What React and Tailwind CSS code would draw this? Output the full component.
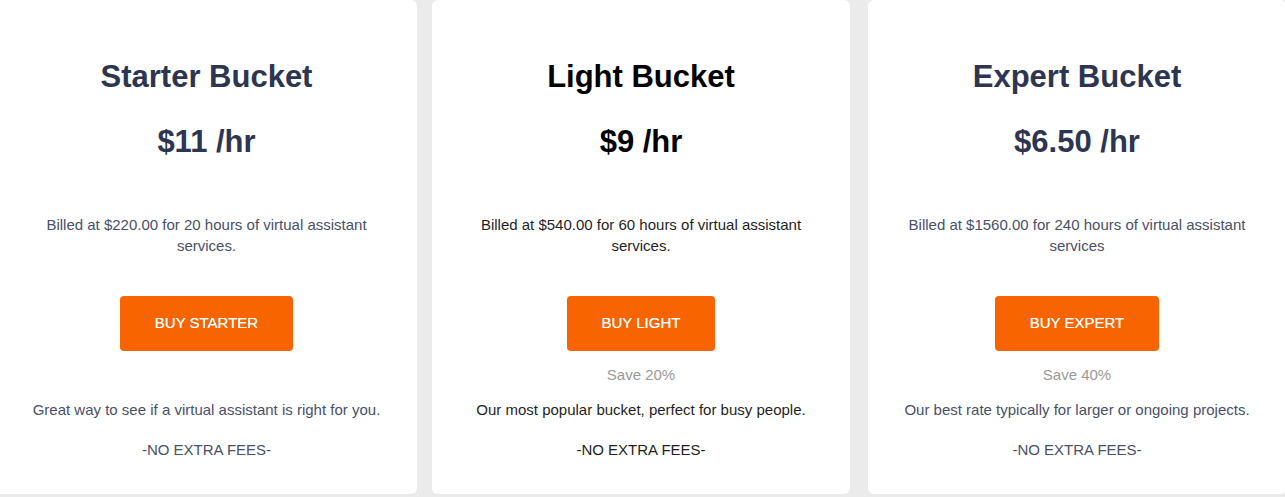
import React from "react";

const plans = [
  {
    title: "Starter Bucket",
    price: "$11 /hr",
    billed: "Billed at $220.00 for 20 hours of virtual assistant services.",
    button: "BUY STARTER",
    save: "",
    desc: "Great way to see if a virtual assistant is right for you.",
    featured: false,
    width: "w-[421px]",
  },
  {
    title: "Light Bucket",
    price: "$9 /hr",
    billed: "Billed at $540.00 for 60 hours of virtual assistant services.",
    button: "BUY LIGHT",
    save: "Save 20%",
    desc: "Our most popular bucket, perfect for busy people.",
    featured: true,
    width: "w-[418px]",
  },
  {
    title: "Expert Bucket",
    price: "$6.50 /hr",
    billed: "Billed at $1560.00 for 240 hours of virtual assistant services",
    button: "BUY EXPERT",
    save: "Save 40%",
    desc: "Our best rate typically for larger or ongoing projects.",
    featured: false,
    width: "w-[418px]",
  },
];

const PlanCard = ({ plan }) => {
  const heading = plan.featured ? "text-black" : "text-[#2d3551]";
  const body = plan.featured ? "text-[#1f1f1f]" : "text-[#4a5068]";

  return (
    <div
      className={`${plan.width} shrink-0 bg-white rounded-md h-[494px] px-[30px] pt-[58px] flex flex-col items-center text-center`}
    >
      <h2 className={`text-[31px] leading-[38px] font-bold ${heading}`}>
        {plan.title}
      </h2>
      <div className={`mt-[27px] text-[31px] leading-[38px] font-bold ${heading}`}>
        {plan.price}
      </div>
      <p className={`mt-[53px] text-[15px] leading-[21px] ${body}`}>
        {plan.billed}
      </p>
      <button className="mt-[40px] h-[55px] px-[35px] rounded-[4px] bg-[#f76400] text-white text-[15px] [text-shadow:0_0_0.4px_#fff]">
        {plan.button}
      </button>
      <div className="mt-[13px] h-[21px] text-[15px] leading-[21px] text-[#999999]">
        {plan.save}
      </div>
      <p className={`mt-[14px] text-[15px] leading-[21px] ${body}`}>
        {plan.desc}
      </p>
      <p className={`mt-[19px] text-[15px] leading-[21px] ${body}`}>
        -NO EXTRA FEES-
      </p>
    </div>
  );
};

export default function App() {
  return (
    <div
      className="w-[1285px] h-[497px] bg-[#ebebeb] overflow-hidden"
      style={{ fontFamily: '"Liberation Sans", Arial, sans-serif' }}
    >
      <div className="flex -ml-[4px]">
        <PlanCard plan={plans[0]} />
        <div className="w-[15px] shrink-0" />
        <PlanCard plan={plans[1]} />
        <div className="w-[18px] shrink-0" />
        <PlanCard plan={plans[2]} />
      </div>
    </div>
  );
}
